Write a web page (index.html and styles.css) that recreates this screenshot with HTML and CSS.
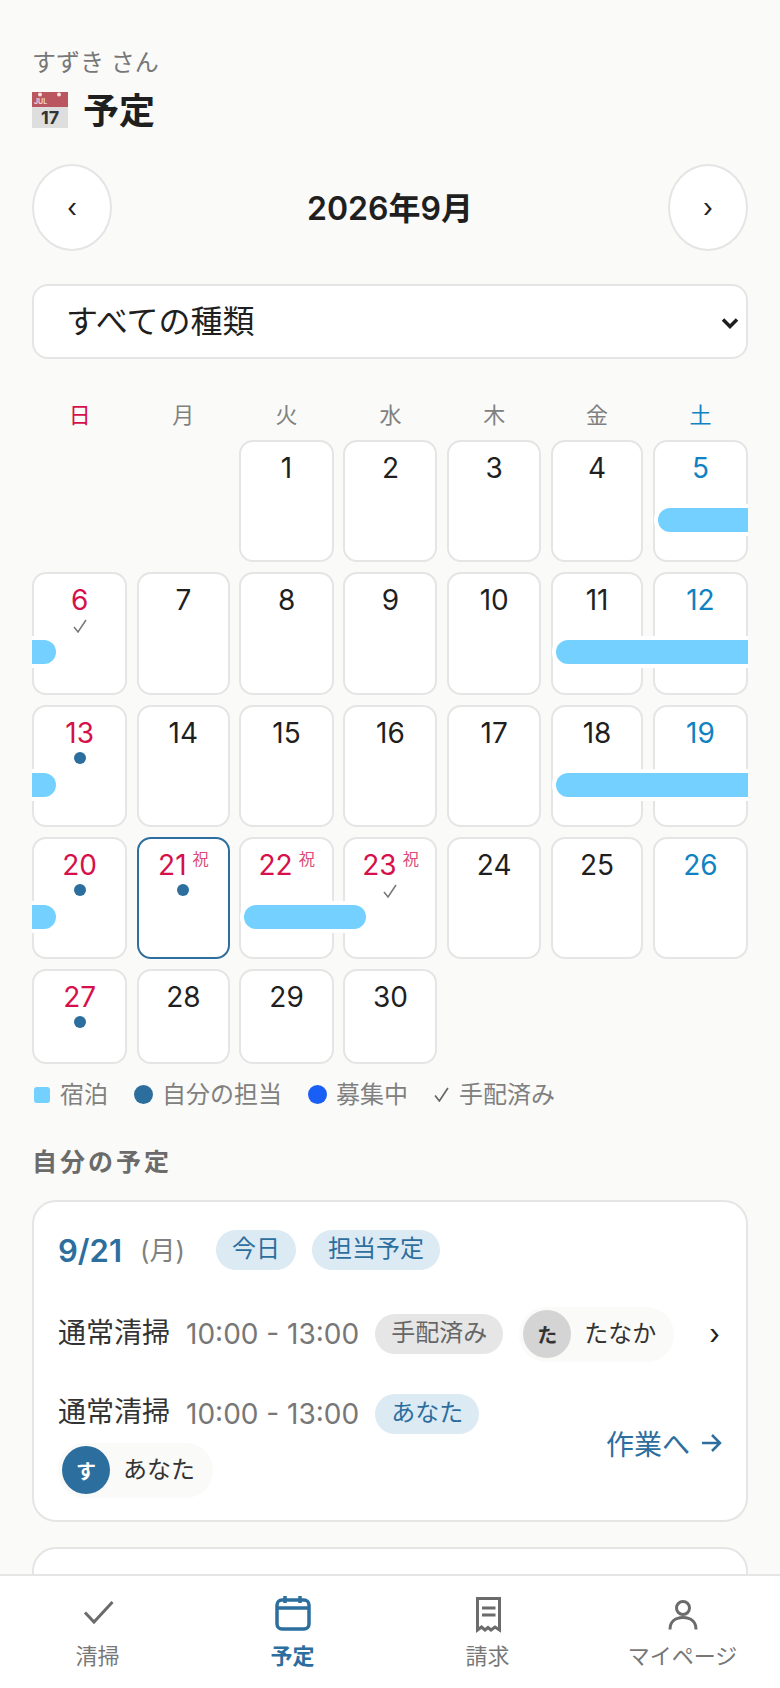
FILE: index.html
```html
<!DOCTYPE html>
<html lang="ja">
<head>
    <meta charset="UTF-8">
    <meta name="viewport" content="width=device-width, initial-scale=1.0">
    <title>予定</title>
    <link rel="stylesheet" href="styles.css">
</head>
<body>
    <div class="app">
        <main class="page">
            <div class="user-name">すずき さん</div>
            <h1 class="page-title">
                <svg class="title-emoji" viewBox="0 0 36 36" aria-hidden="true">
                    <rect width="36" height="36" fill="#dedede"/>
                    <rect width="36" height="15" fill="#b9565f"/>
                    <circle cx="8" cy="2.5" r="2" fill="#f6e4e4"/>
                    <circle cx="27" cy="2.5" r="2" fill="#f6e4e4"/>
                    <text class="emoji-month" x="2" y="12">JUL</text>
                    <text class="emoji-day" x="18" y="32">17</text>
                </svg>
                <span class="page-title-text">予定</span>
            </h1>

            <div class="month-nav">
                <button class="month-button">‹</button>
                <div class="month-label">2026年9月</div>
                <button class="month-button">›</button>
            </div>

            <div class="filter">
                <select class="filter-select">
                    <option>すべての種類</option>
                </select>
                <svg class="filter-arrow" viewBox="0 0 18 12" aria-hidden="true">
                    <path d="M2 2.5 L9 9.5 L16 2.5"/>
                </svg>
            </div>

            <div class="weekdays">
                <div class="sun">日</div>
                <div>月</div>
                <div>火</div>
                <div>水</div>
                <div>木</div>
                <div>金</div>
                <div class="sat">土</div>
            </div>

            <div class="calendar">
                <div class="day-blank"></div>
                <div class="day-blank"></div>
                <div class="day"><div class="num">1</div></div>
                <div class="day"><div class="num">2</div></div>
                <div class="day"><div class="num">3</div></div>
                <div class="day"><div class="num">4</div></div>
                <div class="day"><div class="num sat">5</div><div class="bar bar-start"></div></div>

                <div class="day">
                    <div class="num sun">6</div>
                    <svg class="mark-check" viewBox="0 0 14 14" aria-hidden="true"><path d="M1 8 L5 13 L13 1"/></svg>
                    <div class="bar bar-end"></div>
                </div>
                <div class="day"><div class="num">7</div></div>
                <div class="day"><div class="num">8</div></div>
                <div class="day"><div class="num">9</div></div>
                <div class="day"><div class="num">10</div></div>
                <div class="day"><div class="num">11</div><div class="bar bar-start"></div></div>
                <div class="day"><div class="num sat">12</div></div>

                <div class="day">
                    <div class="num sun">13</div>
                    <div class="mark-dot"></div>
                    <div class="bar bar-end"></div>
                </div>
                <div class="day"><div class="num">14</div></div>
                <div class="day"><div class="num">15</div></div>
                <div class="day"><div class="num">16</div></div>
                <div class="day"><div class="num">17</div></div>
                <div class="day"><div class="num">18</div><div class="bar bar-start"></div></div>
                <div class="day"><div class="num sat">19</div></div>

                <div class="day">
                    <div class="num sun">20</div>
                    <div class="mark-dot"></div>
                    <div class="bar bar-end"></div>
                </div>
                <div class="day today">
                    <div class="num sun">21<span class="holiday">祝</span></div>
                    <div class="mark-dot"></div>
                </div>
                <div class="day">
                    <div class="num sun">22<span class="holiday">祝</span></div>
                    <div class="bar bar-short"></div>
                </div>
                <div class="day">
                    <div class="num sun">23<span class="holiday">祝</span></div>
                    <svg class="mark-check" viewBox="0 0 14 14" aria-hidden="true"><path d="M1 8 L5 13 L13 1"/></svg>
                </div>
                <div class="day"><div class="num">24</div></div>
                <div class="day"><div class="num">25</div></div>
                <div class="day"><div class="num sat">26</div></div>

                <div class="day">
                    <div class="num sun">27</div>
                    <div class="mark-dot"></div>
                </div>
                <div class="day"><div class="num">28</div></div>
                <div class="day"><div class="num">29</div></div>
                <div class="day"><div class="num">30</div></div>
            </div>

            <div class="legend">
                <div class="legend-item legend-item-stay"><span class="legend-stay"></span>宿泊</div>
                <div class="legend-item"><span class="legend-dot"></span>自分の担当</div>
                <div class="legend-item"><span class="legend-dot legend-open"></span>募集中</div>
                <div class="legend-item legend-arranged">
                    <svg class="legend-check" viewBox="0 0 14 14" aria-hidden="true"><path d="M1 8 L5 13 L13 1"/></svg>
                    手配済み
                </div>
            </div>

            <h2 class="section-title">自分の予定</h2>

            <section class="card">
                <div class="card-head">
                    <span class="card-date">9/21</span>
                    <span class="card-dow">(月)</span>
                    <span class="pill pill-blue">今日</span>
                    <span class="pill pill-blue">担当予定</span>
                </div>

                <div class="job job-first">
                    <div class="job-main">
                        <span class="job-name">通常清掃</span>
                        <span class="job-time">10:00 - 13:00</span>
                        <span class="pill pill-gray">手配済み</span>
                        <span class="person">
                            <span class="avatar">た</span>
                            <span class="person-name">たなか</span>
                        </span>
                    </div>
                    <span class="job-chevron">›</span>
                </div>

                <div class="job">
                    <div class="job-main">
                        <span class="job-name">通常清掃</span>
                        <span class="job-time">10:00 - 13:00</span>
                        <span class="pill pill-blue">あなた</span>
                        <span class="person">
                            <span class="avatar avatar-me">す</span>
                            <span class="person-name">あなた</span>
                        </span>
                    </div>
                    <a class="job-link">
                        作業へ
                        <svg class="job-arrow" viewBox="0 0 22 20" aria-hidden="true"><path d="M2 10 H20 M12 2 L20 10 L12 18"/></svg>
                    </a>
                </div>
            </section>

            <section class="card card-next"></section>
        </main>

        <nav class="tabbar">
            <div class="tab">
                <svg class="tab-icon" viewBox="0 0 44 44" aria-hidden="true"><path d="M9 21.5 L18 31 L36.5 11"/></svg>
                <span>清掃</span>
            </div>
            <div class="tab tab-active">
                <svg class="tab-icon" viewBox="0 0 44 44" aria-hidden="true">
                    <rect x="6" y="9" width="32" height="29" rx="5"/>
                    <path d="M6 17 H38 M14 5 V12 M29 5 V12"/>
                </svg>
                <span>予定</span>
            </div>
            <div class="tab">
                <svg class="tab-icon" viewBox="0 0 44 44" aria-hidden="true">
                    <path d="M11.5 39 V7.5 H33.5 V39 L29 36 L25 39 L22 36.5 L19 39 L15.5 36 Z"/>
                    <path d="M16 17 H29.5 M16 24 H29.5"/>
                </svg>
                <span>請求</span>
            </div>
            <div class="tab">
                <svg class="tab-icon" viewBox="0 0 44 44" aria-hidden="true">
                    <circle cx="22" cy="17" r="6.5"/>
                    <path d="M9 38.5 C9 31 14 26.5 22 26.5 C30 26.5 35 31 35 38.5"/>
                </svg>
                <span>マイページ</span>
            </div>
        </nav>
    </div>
</body>
</html>
```

FILE: styles.css
```css
:root {
    /* columns are not quite equal in this layout */
    --cal-cols: 95.3fr 92.6fr 94.3fr 94fr 94fr 92.3fr 95fr;
}

* {
    box-sizing: border-box;
}

body {
    margin: 0;
    font-family: Inter, "Noto Sans CJK JP", sans-serif;
    color: #1f1f1f;
    background-color: #fafaf8;
}

.app {
    display: flex;
    flex-direction: column;
    height: 100vh;
    overflow: hidden;
}

.page {
    flex: 1;
    min-height: 0;
    overflow: hidden;
    padding: 46px 32px 0;
}

/* header */
.user-name {
    font-size: 24px;
    line-height: 34px;
    color: #777;
}

.page-title {
    display: flex;
    align-items: center;
    gap: 15px;
    height: 44px;
    margin: 8px 0 32px;
    font-size: 36px;
    font-weight: 700;
}

.page-title-text {
    margin-bottom: 4px;
}

.title-emoji {
    width: 36px;
    height: 36px;
    overflow: visible;
}

.emoji-month {
    font-size: 7px;
    fill: #efd5d5;
}

.emoji-day {
    font-size: 18px;
    fill: #333;
    text-anchor: middle;
}

/* month switcher */
.month-nav {
    display: flex;
    align-items: center;
    justify-content: space-between;
}

.month-button {
    width: 80px;
    height: 87px;
    padding: 0;
    font-family: inherit;
    font-size: 26px;
    color: #1f1f1f;
    background: #fff;
    border: 2px solid #e5e5e5;
    border-radius: 50%;
}

.month-label {
    margin-bottom: 4px;
    font-size: 32px;
    font-weight: 600;
}

/* filter */
.filter {
    position: relative;
    margin-top: 33px;
}

.filter-select {
    display: block;
    width: 100%;
    height: 75px;
    padding: 0 32px;
    font-family: inherit;
    font-size: 32px;
    color: #1f1f1f;
    background: #fff;
    border: 2px solid #e5e5e5;
    border-radius: 16px;
    appearance: none;
}

.filter-arrow {
    position: absolute;
    top: 33px;
    right: 9px;
    width: 18px;
    height: 12px;
    fill: none;
    stroke: #1f1f1f;
    stroke-width: 3.5;
    pointer-events: none;
}

/* calendar */
.weekdays {
    display: grid;
    grid-template-columns: var(--cal-cols);
    column-gap: 9.7px;
    margin-top: 41px;
    margin-bottom: 10px;
    font-size: 22px;
    line-height: 30px;
    text-align: center;
    color: #808080;
}

.weekdays .sun {
    color: #d6104a;
}

.weekdays .sat {
    color: #0f82c2;
}

.calendar {
    display: grid;
    grid-template-columns: var(--cal-cols);
    grid-template-rows: repeat(4, 122.25px) 94.5px;
    gap: 10px 9.7px;
    overflow: hidden;
}

.day {
    position: relative;
    display: flex;
    flex-direction: column;
    align-items: center;
    padding-top: 9px;
    background: #fff;
    border: 2px solid #e5e5e5;
    border-radius: 14px;
}

.day.today {
    border-color: #2c6e9e;
}

.num {
    font-size: 28px;
    line-height: 34px;
    color: #1f1f1f;
}

.num.sun {
    color: #d6104a;
}

.num.sat {
    color: #0f82c2;
}

.holiday {
    margin-left: 6px;
    font-size: 16px;
    line-height: 1;
    color: #dd4a78;
    vertical-align: 10px;
}

.mark-dot {
    width: 12px;
    height: 12px;
    margin-top: 2px;
    background: #2c6e9e;
    border-radius: 50%;
}

.mark-check {
    width: 14px;
    height: 14px;
    margin-top: 2px;
    fill: none;
    stroke: #777;
    stroke-width: 1.5;
}

.bar {
    position: absolute;
    top: 66px;
    z-index: 1;
    height: 24px;
    background: #74d1ff;
    box-shadow: 0 0 0 4px #fff;
    border-radius: 12px;
}

.bar-start {
    left: 3px;
    width: 240px;
    border-radius: 12px 0 0 12px;
}

.bar-end {
    left: -60px;
    width: 82px;
    border-radius: 0 12px 12px 0;
}

.bar-short {
    left: 3px;
    width: 122px;
}

/* legend */
.legend {
    display: flex;
    align-items: center;
    gap: 26px;
    margin-top: 14px;
    padding-left: 2px;
    font-size: 24px;
    line-height: 34px;
    color: #808080;
}

.legend-item {
    display: flex;
    align-items: center;
    gap: 9px;
}

.legend-item-stay {
    gap: 10px;
}

.legend-stay {
    width: 16px;
    height: 16px;
    background: #74d1ff;
    border-radius: 3px;
}

.legend-dot {
    width: 19px;
    height: 19px;
    background: #2c6e9e;
    border-radius: 50%;
}

.legend-open {
    background: #1a5ff5;
}

.legend-arranged {
    gap: 10px;
}

.legend-check {
    width: 15px;
    height: 15px;
    fill: none;
    stroke: #666;
    stroke-width: 1.6;
}

.section-title {
    margin: 33px 0 21px;
    font-size: 25px;
    font-weight: 700;
    line-height: 34px;
    letter-spacing: 3px;
    color: #6b6b6b;
}

/* cards */
.card {
    padding: 28px 24px 22px;
    background: #fff;
    border: 2px solid #e5e5e5;
    border-radius: 24px;
}

.card-next {
    height: 120px;
    margin-top: 25px;
}

.card-head {
    display: flex;
    align-items: center;
    gap: 16px;
    height: 40px;
}

.card-date {
    margin-top: 2px;
    font-size: 31px;
    line-height: 36px;
    font-weight: 600;
    color: #2c6e9e;
}

.card-dow {
    margin-top: 2px;
    margin-left: 2px;
    margin-right: 15px;
    font-size: 26px;
    line-height: 36px;
    color: #808080;
}

.pill {
    display: inline-block;
    height: 40px;
    padding: 0 16px;
    font-size: 24px;
    line-height: 38px;
    white-space: nowrap;
    border-radius: 20px;
}

.pill-blue {
    color: #2c6e9e;
    background: #dceaf4;
}

.pill-gray {
    color: #666;
    background: #e6e6e6;
}

.job {
    display: flex;
    align-items: center;
    justify-content: space-between;
    margin-top: 32px;
}

.job-first {
    margin-top: 37px;
}

.job-main {
    display: flex;
    flex: 1;
    flex-wrap: wrap;
    align-items: center;
    gap: 9px 16px;
    min-width: 0;
}

.job-name {
    margin-bottom: 3px;
    font-size: 28px;
    line-height: 36px;
    color: #333;
}

.job-time {
    font-size: 28px;
    line-height: 36px;
    color: #777;
}

.person {
    display: inline-flex;
    align-items: center;
    gap: 13px;
    height: 55px;
    padding: 0 18px 0 4px;
    font-size: 24px;
    color: #333;
    background: #fafaf8;
    border-radius: 28px;
}

.person-name {
    margin-bottom: 5px;
}

.avatar {
    display: flex;
    align-items: center;
    justify-content: center;
    width: 48px;
    height: 48px;
    font-size: 20px;
    font-weight: 700;
    color: #333;
    background: #d4d4d4;
    border-radius: 50%;
}

.avatar-me {
    color: #fff;
    background: #2c6e9e;
}

.job-chevron {
    margin-right: 2px;
    font-size: 28px;
    line-height: 1;
    color: #1f1f1f;
}

.job-link {
    display: flex;
    align-items: center;
    gap: 10px;
    margin-bottom: 5px;
    font-size: 28px;
    color: #2c6e9e;
}

.job-arrow {
    width: 22px;
    height: 20px;
    fill: none;
    stroke: #2c6e9e;
    stroke-width: 2.5;
}

/* bottom tabs */
.tabbar {
    display: grid;
    grid-template-columns: repeat(4, 1fr);
    flex: none;
    height: 114px;
    padding-top: 15px;
    background: #fff;
    border-top: 2px solid #e5e5e5;
}

.tab {
    display: flex;
    flex-direction: column;
    align-items: center;
    font-size: 22px;
    line-height: 30px;
    color: #777;
}

.tab-icon {
    width: 44px;
    height: 44px;
    margin-bottom: 6px;
    fill: none;
    stroke: #6b6b6b;
    stroke-width: 3;
}

.tab-active {
    font-weight: 700;
    color: #2c6e9e;
}

.tab-active .tab-icon {
    stroke: #2c6e9e;
    stroke-width: 3.5;
}
```
